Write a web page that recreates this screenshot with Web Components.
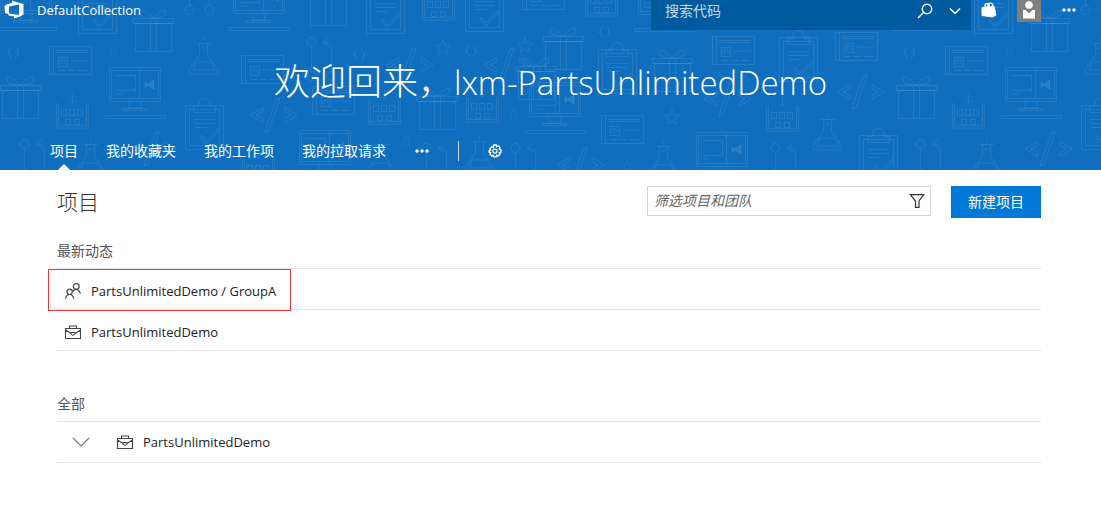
<!DOCTYPE html>
<html lang="zh-CN">
<head>
<meta charset="utf-8">
<meta name="viewport" content="width=device-width, initial-scale=1">
<title>项目</title>
<style>
  body { margin: 0; background: #fff; color: #333; font: 14px/20px "Open Sans", "Noto Sans CJK SC", sans-serif; }
</style>
</head>
<body>
<collection-header></collection-header>
<projects-page></projects-page>

<script>
const ICONS = {
  logo: ['0 0 20 20', '<path fill="#fff" stroke="none" fill-rule="evenodd" d="M.5 6 3 4.200 8 3V.5L13.500 2.500 19.500 4V14.500L16 16.500 10 18.500V16.500L4.500 15.500V14L1 13ZM5 6.500V13.500L15 15V4.500Z"/>'],
  search: ['0 0 16 16', '<circle cx="10" cy="6" r="4.700" stroke-width="1.500"/><path stroke-width="1.500" d="M6.500 9.500 1 15"/>'],
  chevron: ['0 0 16 16', '<path stroke-width="1.500" d="m3 5.500 5 5 5-5"/>'],
  bag: ['0 0 16 16', '<path fill="#fff" d="m1 5.500 12-1.500L15 13 11.500 15 1 13.500Z"/><path stroke-width="1.300" d="M4 6V3.500Q4 1.500 6.500 1.500T8 4.500M7 5V2.500Q8 .7 10 1.200T11.500 4"/>'],
  more: ['0 0 16 16', '<g fill="currentColor" stroke="none"><circle cx="3" cy="8" r="1.700"/><circle cx="8" cy="8" r="1.700"/><circle cx="13" cy="8" r="1.700"/></g>'],
  gear: ['0 0 16 16', '<path stroke-width="1.400" stroke-linejoin="round" d="m6.700 1.200h2.600l.4 1.700 1.500-.9 1.900 1.900-.9 1.500 1.700.4v2.600l-1.700.4.9 1.500-1.900 1.900-1.500-.9-.4 1.700H6.700l-.4-1.700-1.500.9-1.900-1.900.9-1.500-1.700-.4V6.800l1.700-.4-.9-1.500L4.800 3l1.500.9Z" transform="translate(0 .8)"/><circle cx="8" cy="8.200" r="2" stroke-width="1.200"/>'],
  funnel: ['0 0 16 16', '<path stroke-width="1.200" d="M1.300 1.600h13.400L10 8v6.400H6.500V8Z"/>'],
  people: ['0 0 16 16', '<g stroke-width="1.200"><circle cx="11.200" cy="3.500" r="2.900"/><path d="M7.600 8.800Q8.500 6.400 11.200 6.400t4.200 4.200"/><circle cx="4.600" cy="8.800" r="2.700"/><path d="M.6 15.800Q1 11.500 4.600 11.500t4 4.300"/></g>'],
  briefcase: ['0 0 18 16', '<g stroke-width="1.100"><path d="M1.500 4.500h15v10h-15ZM5.500 4.500v-2.500h7v2.500M1.500 6l5.500 3.500M16.500 6 11 9.500M7 8.500h4v1.500q-2 2.500-4 0Z"/></g>'],
  expand: ['0 0 18 18', '<path stroke-width="1.100" d="m1 5 8 8 8-8"/>'],
  person: ['0 0 24 24', '<path fill="#808080" stroke="none" d="M0 0h24v24H0z"/><g fill="#fff" stroke="none"><circle cx="12" cy="7" r="3.800"/><path d="M6 12h2.500L12 15.500l3.500-3.500H18V20.500H6Z"/></g>']
};

const define = (name, html, setup) => {
  const tpl = document.createElement('template');
  tpl.innerHTML = html;
  customElements.define(name, class extends HTMLElement {
    constructor() {
      super();
      this.attachShadow({ mode: 'open' }).append(tpl.content.cloneNode(true));
    }
    connectedCallback() { if (setup) setup(this, this.shadowRoot); }
  });
};

define('ui-icon', `
<style>
  :host { display: block; flex: none; width: var(--icon-size, 16px); height: 16px; }
  svg { display: block; width: 100%; height: 100%; fill: none; stroke: currentColor; }
</style>
<svg aria-hidden="true"></svg>`, (el, root) => {
  const [box, art] = ICONS[el.getAttribute('name')];
  const svg = root.querySelector('svg');
  svg.setAttribute('viewBox', box);
  svg.innerHTML = art;
});

/* Doodles behind the banner: [shape, x, y, scale] on a tile 896 units wide. */
const DOODLES = [
  ['gift',0,75],['gift',133,8],['gift',308,-18],['gift',417,86],['gift',543,26],['gift',652,48],['gift',516,56],
  ['card',49,46],['card',241,55],['card',312,86],['card',522,-19],['card',712,36],['card',601,115],['card',835,32],
  ['star',108,45,.55],['star',516,36,.9],['star',434,38,.9],['star',509,108,.5],['star',400,135,.6],['star',663,108,.9],['star',621,160,.6],
  ['monitor',105,67],['monitor',-4,-21],['monitor',229,-21],['monitor',295,130],['monitor',525,82],['monitor',634,-20],['monitor',692,132],
  ['robot',56,94],['robot',422,-14],['robot',368,90],['robot',466,88],['robot',242,150],['robot',585,-18],['robot',766,97],
  ['clip',185,97],['clip',78,-19],['clip',366,-19],['clip',465,-21],['clip',598,41],['clip',779,29],['clip',859,127],
  ['flask',188,42],['flask',75,143],['flask',365,143],['flask',464,140],['flask',648,145],['flask',812,118],
  ['graph',19,138],['graph',184,-30],['graph',306,36],['graph',421,142],['graph',510,142],['graph',770,142],
  ['code',249,98],['code',128,132],['code',385,48],['code',483,48],['code',703,82],['code',836,75],['code',556,148],
  ['brace',7,47],['brace',353,49],['brace',465,45],['brace',598,26]
];
define('banner-pattern', `
<style>
  :host { display: block; position: absolute; inset: 0; overflow: hidden; pointer-events: none; }
  svg { display: block; width: 100%; height: 100%; fill: none; stroke: #fff; stroke-opacity: .09; }
</style>
<svg aria-hidden="true">
  <defs>
    <g id="gift"><path d="M.5 10.500h40v5h-40ZM2.500 15.500h36v28h-36ZM17.500 10.500v33M23.500 10.500v33M20 10Q6 10 7 4T20 10ZM20 10Q34 10 33 4T20 10Z"/></g>
    <g id="card"><path d="M.5.500h42v28H.5ZM4.500.500v28M7 4.500h32M7 6.500h32M9.500 11.500h9v9h-9ZM12 18v-4h4v4M22 15h17M9 24.500h7M19 24.500h7M29 24.500h9"/></g>
    <g id="star"><path d="m8 8 2-6 2 6h6l-4.500 4 1.800 6L10 14.500 4.700 18l1.800-6L2 8Z"/></g>
    <g id="monitor"><path d="M4.500.500h51v34h-51ZM6.500 3.500h47v28h-47ZM34.500 2v29M10.500 8.500h20v15h-20M10 27h8M24 35v6h12v-6M17.500 41.500h24v2h-24ZM.5 48.500h60v3H.5Z"/><path d="m40 15 3 2 6-4v9l-6-4-3 2Z" fill="#fff" fill-opacity=".1"/></g>
    <g id="robot"><path d="M.5 9v25h32V9M2.500 9v22.500h28V9M5.500 15.500h5v6h-5ZM13.500 15.500h5v6h-5ZM21.500 15.500h5v6h-5ZM9.500 25.500h5v5h-5ZM18.500 25.500h5v5h-5ZM16.500 0v9m-3-3 3 3 3-3"/></g>
    <g id="clip"><path d="M.5 8.500h38v44H.5ZM4.500 12.500h30v36h-30ZM8.500 15.500v-6h5q0-8 6-8t6 8h5v6ZM9 22.500h21M9 26.500h21M9 30.500h13M16 38l5 6 12-12v3L21 47l-5-6Z"/></g>
    <g id="flask"><path d="M9 1.500h14M11.500 2v11L1 28q-1 4 4 4h21q5 0 4-4L19.500 13V2M8 20h15L27 28H5ZM13.500 6h4M15.500-5v3"/></g>
    <g id="graph"><circle cx="5.500" cy="6" r="4.500"/><circle cx="5.500" cy="40" r="4.500"/><circle cx="25.500" cy="40" r="4.500"/><path d="M5.500 11v24M25.500 35V12q0-6-8-6m6-5-6 5 6 5"/></g>
    <g id="code"><path d="M14 9.500 1 17l13 7.500v-4L7 17l7-3.500ZM36 9.500 48 17l-12 7.500v-4l6-3.500-6-3.500ZM27 1l4-1L20 33l-4 1Z"/></g>
    <g id="brace"><path d="M5 .5Q2 1 2.500 4T.5 6Q3 6 2.500 8t2.500 3M8 .5q3 .5 2.500 3.500t2 2q-2.500 0-2 2T8 11"/></g>
    <g id="tile"></g>
  </defs>
  <use href="#tile"/><use href="#tile" x="896"/><use href="#tile" x="1792"/>
</svg>`, (el, root) => {
  root.querySelector('#tile').innerHTML = DOODLES
    .map(([s, x, y, k = 1]) => `<use href="#${s}" transform="translate(${x} ${y}) scale(${k})"/>`).join('');
});

define('code-search', `
<style>
  :host { display: block; width: 320px; }
  form { display: flex; align-items: center; gap: 14px; height: 22px; padding: 0 8px 8px 14px; background: #005a9e; color: #fff; }
  input { flex: 1; min-width: 0; padding: 0; border: 0; outline: 0; background: none; color: #fff; font: inherit; }
  input::placeholder { color: #c7dcee; opacity: 1; }
  button { padding: 0; border: 0; background: none; color: inherit; }
</style>
<form role="search" onsubmit="return false">
  <input type="search" aria-label="搜索代码" placeholder="搜索代码">
  <button type="submit" aria-label="搜索"><ui-icon name="search"></ui-icon></button>
  <button type="button" aria-label="搜索范围"><ui-icon name="chevron"></ui-icon></button>
</form>`);

define('top-bar', `
<style>
  :host { display: flex; align-items: flex-start; height: 30px; }
  a { display: flex; align-items: center; gap: 13px; height: 20px; padding-left: 4px; margin-right: auto; color: #fff; text-decoration: none; font-size: 13px; }
  a ui-icon { --icon-size: 20px; height: 20px; }
  .tools { display: flex; align-items: center; gap: 20px; height: 20px; padding: 0 24px 0 10px; }
  button { display: block; padding: 0; border: 0; background: none; color: #fff; }
  .user { --icon-size: 24px; }
  .user ui-icon { height: 24px; }
</style>
<a href="#"><ui-icon name="logo"></ui-icon><span>DefaultCollection</span></a>
<code-search></code-search>
<div class="tools">
  <button type="button" aria-label="市场"><ui-icon name="bag"></ui-icon></button>
  <button type="button" class="user" aria-label="用户"><ui-icon name="person"></ui-icon></button>
  <button type="button" aria-label="更多"><ui-icon name="more"></ui-icon></button>
</div>`);

define('hub-tabs', `
<style>
  :host { display: block; }
  nav { display: flex; align-items: center; height: 38px; padding-left: 36px; }
  a { position: relative; padding: 0 14px; line-height: 38px; color: #fff; text-decoration: none; white-space: nowrap; }
  a[aria-current]::after { content: ""; position: absolute; left: calc(50% - 6px); bottom: 0; border: 6px solid transparent; border-top: 0; border-bottom-color: #fff; }
  button { padding: 0 14px; border: 0; background: none; color: #fff; --icon-size: 16px; }
  i { width: 1px; height: 20px; margin: 0 14px; background: #cfd6dc; }
</style>
<nav aria-label="中心">
  <a href="#" aria-current="page">项目</a><a href="#">我的收藏夹</a><a href="#">我的工作项</a><a href="#">我的拉取请求</a>
  <button type="button" aria-label="更多"><ui-icon name="more"></ui-icon></button>
  <i></i>
  <button type="button" aria-label="设置"><ui-icon name="gear"></ui-icon></button>
</nav>`);

define('collection-header', `
<style>
  :host { display: block; position: relative; background: #106ebe; color: #fff; }
  .content { position: relative; }
  h1 { margin: 28px 0 26px; font-size: 36px; line-height: 48px; font-weight: 300; text-align: center; }
  h1 span { font-size: 33px; line-height: 1; }
</style>
<banner-pattern></banner-pattern>
<div class="content">
  <top-bar></top-bar>
  <h1>欢迎回来，<span>lxm-PartsUnlimitedDemo</span></h1>
  <hub-tabs></hub-tabs>
</div>`);

define('project-filter', `
<style>
  :host { display: block; width: 284px; }
  label { display: flex; align-items: center; box-sizing: border-box; height: 30px; padding: 0 5px 0 6px; border: 1px solid #d4d4d4; }
  input { flex: 1; min-width: 0; padding: 0; border: 0; outline: 0; font: inherit; font-style: italic; color: #333; }
  input::placeholder { color: #666; opacity: 1; }
</style>
<label><input type="text" aria-label="筛选项目和团队" placeholder="筛选项目和团队"><ui-icon name="funnel"></ui-icon></label>`);

define('project-row', `
<style>
  :host { display: flex; align-items: center; height: 36px; padding-top: 4px; border-bottom: 1px solid #e6e6e6; }
  :host([expandable]) { height: 40px; padding-top: 0; }
  a { position: relative; display: flex; align-items: center; gap: 9px; height: 36px; padding: 0 15px 0 7px; color: #222; text-decoration: none; font-size: 13px; --icon-size: 18px; }
  a ui-icon { color: #444; }
  button { display: none; padding: 0; margin: 0 19px 0 15px; border: 0; background: none; color: #777; --icon-size: 18px; }
  button ui-icon { height: 18px; }
  :host([expandable]) button { display: block; }
  :host([marked]) a::after { content: ""; position: absolute; inset: -4px 0 -2px -9px; border: 1px solid #f03535; }
</style>
<button type="button" aria-label="展开"><ui-icon name="expand"></ui-icon></button>
<a href="#"><span><slot></slot></span></a>`, (el, root) => {
  const icon = document.createElement('ui-icon');
  icon.setAttribute('name', el.getAttribute('icon'));
  root.querySelector('a').prepend(icon);
});

define('project-group', `
<style>
  :host { display: block; }
  h3 { margin: 0; padding-bottom: 7px; border-bottom: 1px solid #e6e6e6; color: #555; font-size: 14px; line-height: 20px; font-weight: 400; }
</style>
<h3><slot name="title"></slot></h3>
<slot></slot>`);

define('projects-page', `
<style>
  :host { display: block; padding: 16px 60px 40px 57px; }
  header { display: flex; align-items: flex-start; gap: 20px; }
  h2 { margin: 0 auto 0 0; font-size: 21px; line-height: 32px; font-weight: 300; }
  button { height: 32px; padding: 0 17px; border: 0; background: #0078d7; color: #fff; font: inherit; }
  .groups { display: grid; gap: 43px; margin-top: 23px; }
</style>
<header>
  <h2>项目</h2>
  <project-filter></project-filter>
  <button type="button">新建项目</button>
</header>
<div class="groups">
  <project-group><span slot="title">最新动态</span>
    <project-row icon="people" marked>PartsUnlimitedDemo / GroupA</project-row>
    <project-row icon="briefcase">PartsUnlimitedDemo</project-row>
  </project-group>
  <project-group><span slot="title">全部</span>
    <project-row icon="briefcase" expandable>PartsUnlimitedDemo</project-row>
  </project-group>
</div>`);
</script>
</body>
</html>
